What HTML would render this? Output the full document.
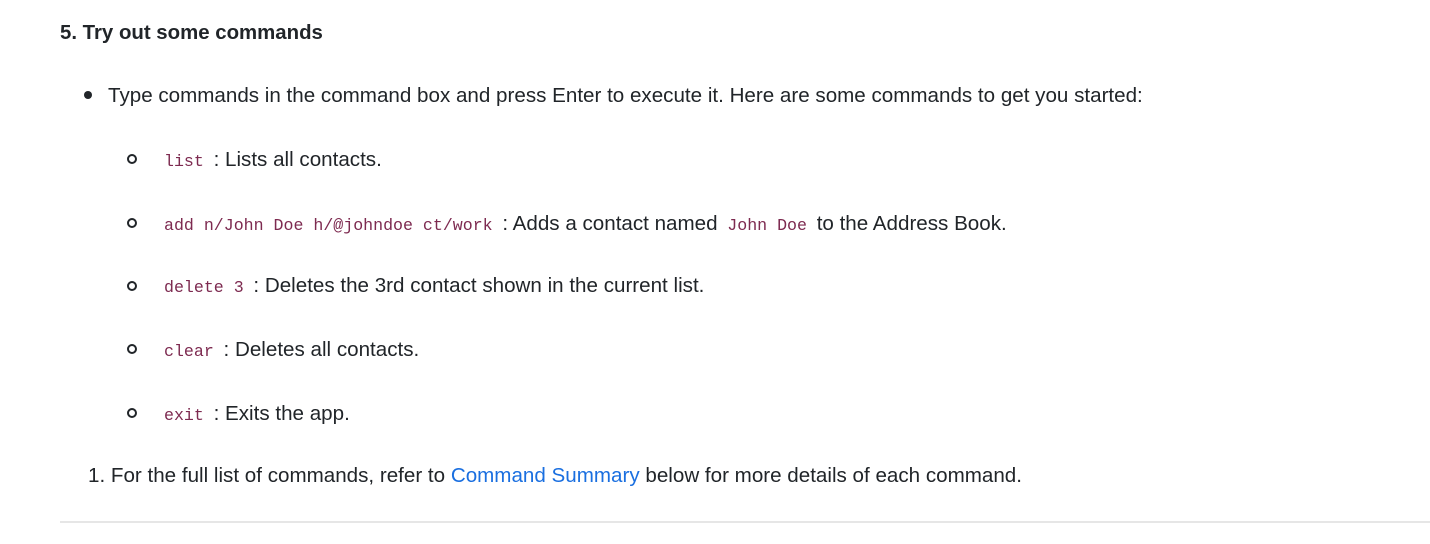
<!DOCTYPE html>
<html><head><meta charset="utf-8"><style>
body{margin:0;width:1430px;height:544px;background:#fff;color:#212529;font-family:"Liberation Sans",sans-serif;font-size:20.6px;position:relative;overflow:hidden}
.a{position:absolute;white-space:nowrap;line-height:24px}
code{font-family:"Liberation Mono",monospace;font-size:16.6px;color:#7d2a50;padding:0 4px}
h5{position:absolute;left:60px;top:21px;margin:0;font-size:20.4px;font-weight:bold;line-height:24px}
.dot{position:absolute;left:84px;top:91px;width:8px;height:8px;border-radius:50%;background:#212529}
.c{position:absolute;left:127px;width:6px;height:6px;border:2px solid #212529;border-radius:50%}
a{color:#1a6fe0;text-decoration:none}
hr{position:absolute;left:60px;top:521px;width:1370px;margin:0;border:0;border-top:2px solid #e6e6e6}
</style></head><body>
<h5>5. Try out some commands</h5>
<div class="dot"></div>
<div class="a" style="left:108px;top:84px">Type commands in the command box and press Enter to execute it. Here are some commands to get you started:</div>
<div class="c" style="top:154px"></div>
<div class="a" style="left:160px;top:148px"><code>list</code> : Lists all contacts.</div>
<div class="c" style="top:218px"></div>
<div class="a" style="left:160px;top:212px"><code>add n/John Doe h/@johndoe ct/work</code> : Adds a contact named <code>John Doe</code> to the Address Book.</div>
<div class="c" style="top:281px"></div>
<div class="a" style="left:160px;top:274px"><code>delete 3</code> : Deletes the 3rd contact shown in the current list.</div>
<div class="c" style="top:344px"></div>
<div class="a" style="left:160px;top:338px"><code>clear</code> : Deletes all contacts.</div>
<div class="c" style="top:408px"></div>
<div class="a" style="left:160px;top:402px"><code>exit</code> : Exits the app.</div>
<div class="a" style="left:88px;top:464px">1. For the full list of commands, refer to <a>Command Summary</a> below for more details of each command.</div>
<hr>
</body></html>
